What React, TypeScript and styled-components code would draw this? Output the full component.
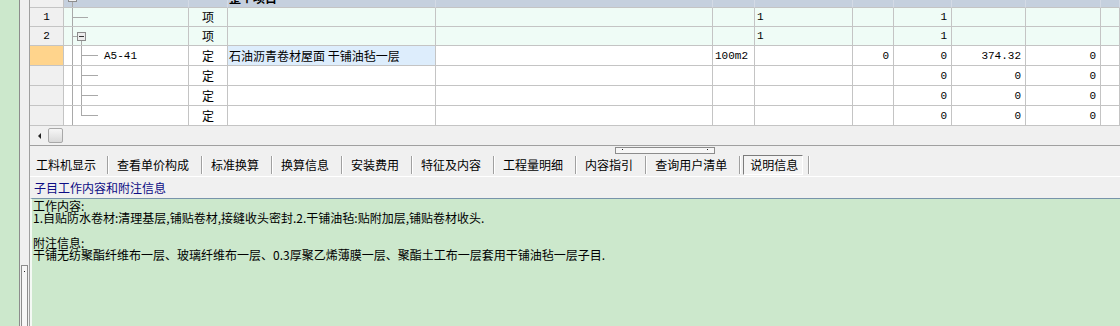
import React from "react";
import styled, { createGlobalStyle } from "styled-components";

type TreeKind = "root" | "leaf" | "parent" | "child" | "lastChild";

type RowData = {
  num: string;
  tree: TreeKind;
  code?: string;
  kind: string;
  name?: string;
  unit?: string;
  c7?: string;
  c8?: string;
  c9?: string;
  c10?: string;
  c11?: string;
  group?: boolean;
  current?: boolean;
  h: number;
};

const rows: RowData[] = [
  { num: "1", tree: "leaf", kind: "项", c7: "1", c9: "1", group: true, h: 19 },
  { num: "2", tree: "parent", kind: "项", c7: "1", c9: "1", group: true, h: 19 },
  {
    num: "",
    tree: "child",
    code: "A5-41",
    kind: "定",
    name: "石油沥青卷材屋面 干铺油毡一层",
    unit: "100m2",
    c8: "0",
    c9: "0",
    c10: "374.32",
    c11: "0",
    current: true,
    h: 20,
  },
  { num: "", tree: "child", kind: "定", c9: "0", c10: "0", c11: "0", h: 20 },
  { num: "", tree: "child", kind: "定", c9: "0", c10: "0", c11: "0", h: 20 },
  { num: "", tree: "lastChild", kind: "定", c9: "0", c10: "0", c11: "0", h: 20 },
];

const tabs = [
  "工料机显示",
  "查看单价构成",
  "标准换算",
  "换算信息",
  "安装费用",
  "特征及内容",
  "工程量明细",
  "内容指引",
  "查询用户清单",
  "说明信息",
];

const TreeGuide = ({ kind, h }: { kind: TreeKind; h: number }) => {
  const m = Math.floor(h / 2) + 0.5;
  const line = "#a9a9a9";
  return (
    <svg width="40" height={h} style={{ flexShrink: 0 }} shapeRendering="crispEdges">
      {kind === "root" ? (
        <>
          <line x1="8.5" y1={m + 4} x2="8.5" y2={h} stroke={line} />
          <rect x="4.5" y={m - 4} width="8" height="8" fill="#f2f2f2" stroke="#8c8c8c" />
        </>
      ) : (
        <line x1="8.5" y1="0" x2="8.5" y2={h} stroke={line} />
      )}
      {kind === "leaf" && <line x1="8.5" y1={m} x2="24" y2={m} stroke={line} />}
      {kind === "parent" && (
        <>
          <line x1="8.5" y1={m} x2="13" y2={m} stroke={line} />
          <line x1="17.5" y1={m + 4} x2="17.5" y2={h} stroke={line} />
          <rect x="13.5" y={m - 4} width="8" height="8" fill="#ececec" stroke="#8c8c8c" />
          <line x1="15" y1={m} x2="20" y2={m} stroke="#333" />
        </>
      )}
      {(kind === "child" || kind === "lastChild") && (
        <>
          <line x1="17.5" y1="0" x2="17.5" y2={kind === "child" ? h : m} stroke={line} />
          <line x1="17.5" y1={m} x2="34" y2={m} stroke={line} />
        </>
      )}
    </svg>
  );
};

const App = () => {
  return (
    <>
      <GlobalStyle />
      <Frame>
        <SideStrip />
        <SideBar>
          <SideThumb>
            <Dot />
          </SideThumb>
        </SideBar>
        <Main>
          <GridPanel>
            <GridViewport>
              <Rows>
                <Row $h={20}>
                  <Cell $bg="#f0f0f0" />
                  <Cell $bg="#c5d0de" $head>
                    <TreeGuide kind="root" h={19} />
                  </Cell>
                  <Cell $bg="#c5d0de" $head />
                  <Cell $bg="#c5d0de" $head>
                    <RootTitle>整个项目</RootTitle>
                  </Cell>
                  {Array.from({ length: 8 }).map((_, i) => (
                    <Cell key={i} $bg="#c5d0de" $head />
                  ))}
                </Row>
                {rows.map((r, i) => {
                  const bg = r.group ? "#effcf6" : "#ffffff";
                  return (
                    <Row key={i} $h={r.h}>
                      <Cell $bg={r.current ? "#ffd48c" : "#f0f0f0"} $align="center">
                        <Num>{r.num}</Num>
                      </Cell>
                      <Cell $bg={bg}>
                        <TreeGuide kind={r.tree} h={r.h - 1} />
                        <Num>{r.code}</Num>
                      </Cell>
                      <Cell $bg={bg} $align="center">
                        {r.kind}
                      </Cell>
                      <Cell $bg={r.current ? "#ddedfc" : bg} $pad="0 0 0 1px">
                        {r.name}
                      </Cell>
                      <Cell $bg={bg} />
                      <Cell $bg={bg} $pad="0 0 0 2px">
                        <Num>{r.unit}</Num>
                      </Cell>
                      <Cell $bg={bg} $pad="0 0 0 2px">
                        <Num>{r.c7}</Num>
                      </Cell>
                      <Cell $bg={bg} $align="right">
                        <Num>{r.c8}</Num>
                      </Cell>
                      <Cell $bg={bg} $align="right">
                        <Num>{r.c9}</Num>
                      </Cell>
                      <Cell $bg={bg} $align="right">
                        <Num>{r.c10}</Num>
                      </Cell>
                      <Cell $bg={bg} $align="right">
                        <Num>{r.c11}</Num>
                      </Cell>
                      <Cell $bg={bg} />
                    </Row>
                  );
                })}
              </Rows>
            </GridViewport>
            <HScroll>
              <ArrowBtn>
                <LeftArrow />
              </ArrowBtn>
              <HThumb />
            </HScroll>
          </GridPanel>
          <SplitStrip>
            <Grip>
              <Dot />
              <Dot />
            </Grip>
          </SplitStrip>
          <TabBar>
            {tabs.map((t, i) => (
              <React.Fragment key={t}>
                <Tab $active={i === tabs.length - 1}>{t}</Tab>
                <TabSep />
              </React.Fragment>
            ))}
          </TabBar>
          <Caption>子目工作内容和附注信息</Caption>
          <NotePanel>
            <NoteLine>工作内容:</NoteLine>
            <NoteLine>
              1.自贴防水卷材:清理基层,铺贴卷材,接缝收头密封.2.干铺油毡:贴附加层,铺贴卷材收头.
            </NoteLine>
            <NoteGap />
            <NoteLine>附注信息:</NoteLine>
            <NoteLine>
              干铺无纺聚酯纤维布一层、玻璃纤维布一层、0.3厚聚乙烯薄膜一层、聚酯土工布一层套用干铺油毡一层子目.
            </NoteLine>
          </NotePanel>
        </Main>
      </Frame>
    </>
  );
};
export default App;

const GlobalStyle = createGlobalStyle`
  html, body {
    margin: 0;
    padding: 0;
    background: #f0f0f0;
  }
  body {
    font-family: "Noto Sans CJK SC", "Liberation Sans", sans-serif;
    font-size: 12px;
    color: #000;
  }
`;

const Frame = styled.div`
  display: flex;
  width: 1120px;
  height: 326px;
  overflow: hidden;
`;

const SideStrip = styled.div`
  width: 19px;
  background: #cce8cc;
`;

const SideBar = styled.div`
  width: 9px;
  display: flex;
  flex-direction: column;
  justify-content: flex-end;
  background: #f0f0f0;
  border-left: 1px solid #8c8c8c;
  border-right: 1px solid #a0a0a0;
`;

const SideThumb = styled.div`
  height: 55px;
  margin: 0 1px;
  border: 1px solid #8c8c8c;
  border-bottom: none;
  background: #f6f6f6;
  display: flex;
  justify-content: center;
  padding-top: 5px;
`;

const Dot = styled.span`
  width: 1px;
  height: 1px;
  background: #222;
`;

const Main = styled.div`
  flex: 1;
  display: flex;
  flex-direction: column;
  min-width: 0;
`;

const GridPanel = styled.div`
  height: 146px;
  box-sizing: border-box;
  border-bottom: 1px solid #a0a0a0;
  display: flex;
  flex-direction: column;
`;

const GridViewport = styled.div`
  height: 126px;
  overflow: hidden;
  background: #fff;
`;

const Rows = styled.div`
  margin-top: -12px;
`;

const Row = styled.div<{ $h: number }>`
  display: grid;
  grid-template-columns: 34px 125px 39px 208px 277px 42px 98px 41px 58px 74px 75px 1fr;
  height: ${(p) => p.$h}px;
`;

const Cell = styled.div<{
  $bg: string;
  $align?: "left" | "center" | "right";
  $pad?: string;
  $head?: boolean;
}>`
  display: flex;
  align-items: center;
  justify-content: ${(p) =>
    p.$align === "center" ? "center" : p.$align === "right" ? "flex-end" : "flex-start"};
  padding: ${(p) => p.$pad || (p.$align === "right" ? "0 4px 0 0" : "0")};
  background: ${(p) => p.$bg};
  border-right: 1px solid ${(p) => (p.$head ? "#d3dae5" : "#c4c4c4")};
  border-bottom: 1px solid #c4c4c4;
  overflow: hidden;
  white-space: nowrap;
  line-height: 12px;
  min-width: 0;
`;

const Num = styled.span`
  font-family: "Liberation Mono", "DejaVu Sans Mono", monospace;
  font-size: 11px;
`;

const RootTitle = styled.span`
  font-weight: bold;
  padding-left: 1px;
`;

const HScroll = styled.div`
  height: 19px;
  display: flex;
  align-items: center;
  background: #f0f0f0;
`;

const ArrowBtn = styled.div`
  width: 18px;
  height: 19px;
  display: flex;
  align-items: center;
  justify-content: center;
`;

const LeftArrow = styled.span`
  width: 0;
  height: 0;
  border-top: 3px solid transparent;
  border-bottom: 3px solid transparent;
  border-right: 3px solid #222;
`;

const HThumb = styled.div`
  width: 13px;
  height: 13px;
  border: 1px solid #a8a8a8;
  border-radius: 2px;
  background: linear-gradient(#f6f6f6, #d9d9d9);
`;

const SplitStrip = styled.div`
  height: 7px;
  padding: 1px 0 0 585px;
  box-sizing: border-box;
`;

const Grip = styled.div`
  width: 86px;
  height: 4px;
  border: 1px solid #8c8c8c;
  background: #f7f7f7;
  display: flex;
  align-items: flex-start;
  justify-content: space-between;
  padding: 1px 6px 0;
`;

const TabBar = styled.div`
  height: 23px;
  display: flex;
  align-items: center;
`;

const Tab = styled.div<{ $active?: boolean }>`
  height: 20px;
  box-sizing: border-box;
  display: flex;
  align-items: center;
  padding: ${(p) => (p.$active ? "0 4px 0 6px" : "0 12px 0 8px")};
  margin: ${(p) => (p.$active ? "0 5px 0 2px" : "0")};
  border: ${(p) => (p.$active ? "1px solid" : "none")};
  border-color: #7c7c7c #ffffff #ffffff #7c7c7c;
  background: ${(p) => (p.$active ? "#f4f4f4" : "transparent")};
  white-space: nowrap;
  &:first-child {
    padding-left: 6px;
    padding-right: 11px;
  }
`;

const TabSep = styled.div`
  width: 1px;
  height: 18px;
  background: #a0a0a0;
  border-right: 1px solid #fff;
`;

const Caption = styled.div`
  height: 21px;
  line-height: 21px;
  border-top: 1px solid #fff;
  padding-left: 4px;
  color: #0c0c84;
`;

const NotePanel = styled.div`
  flex: 1;
  background: #cce8cc;
  border-top: 1px solid #7894aa;
  border-left: 2px solid #f4f9f4;
  padding: 1px 0 0 1px;
  line-height: 12px;
`;

const NoteLine = styled.div`
  white-space: nowrap;
`;

const NoteGap = styled.div`
  height: 13px;
`;
